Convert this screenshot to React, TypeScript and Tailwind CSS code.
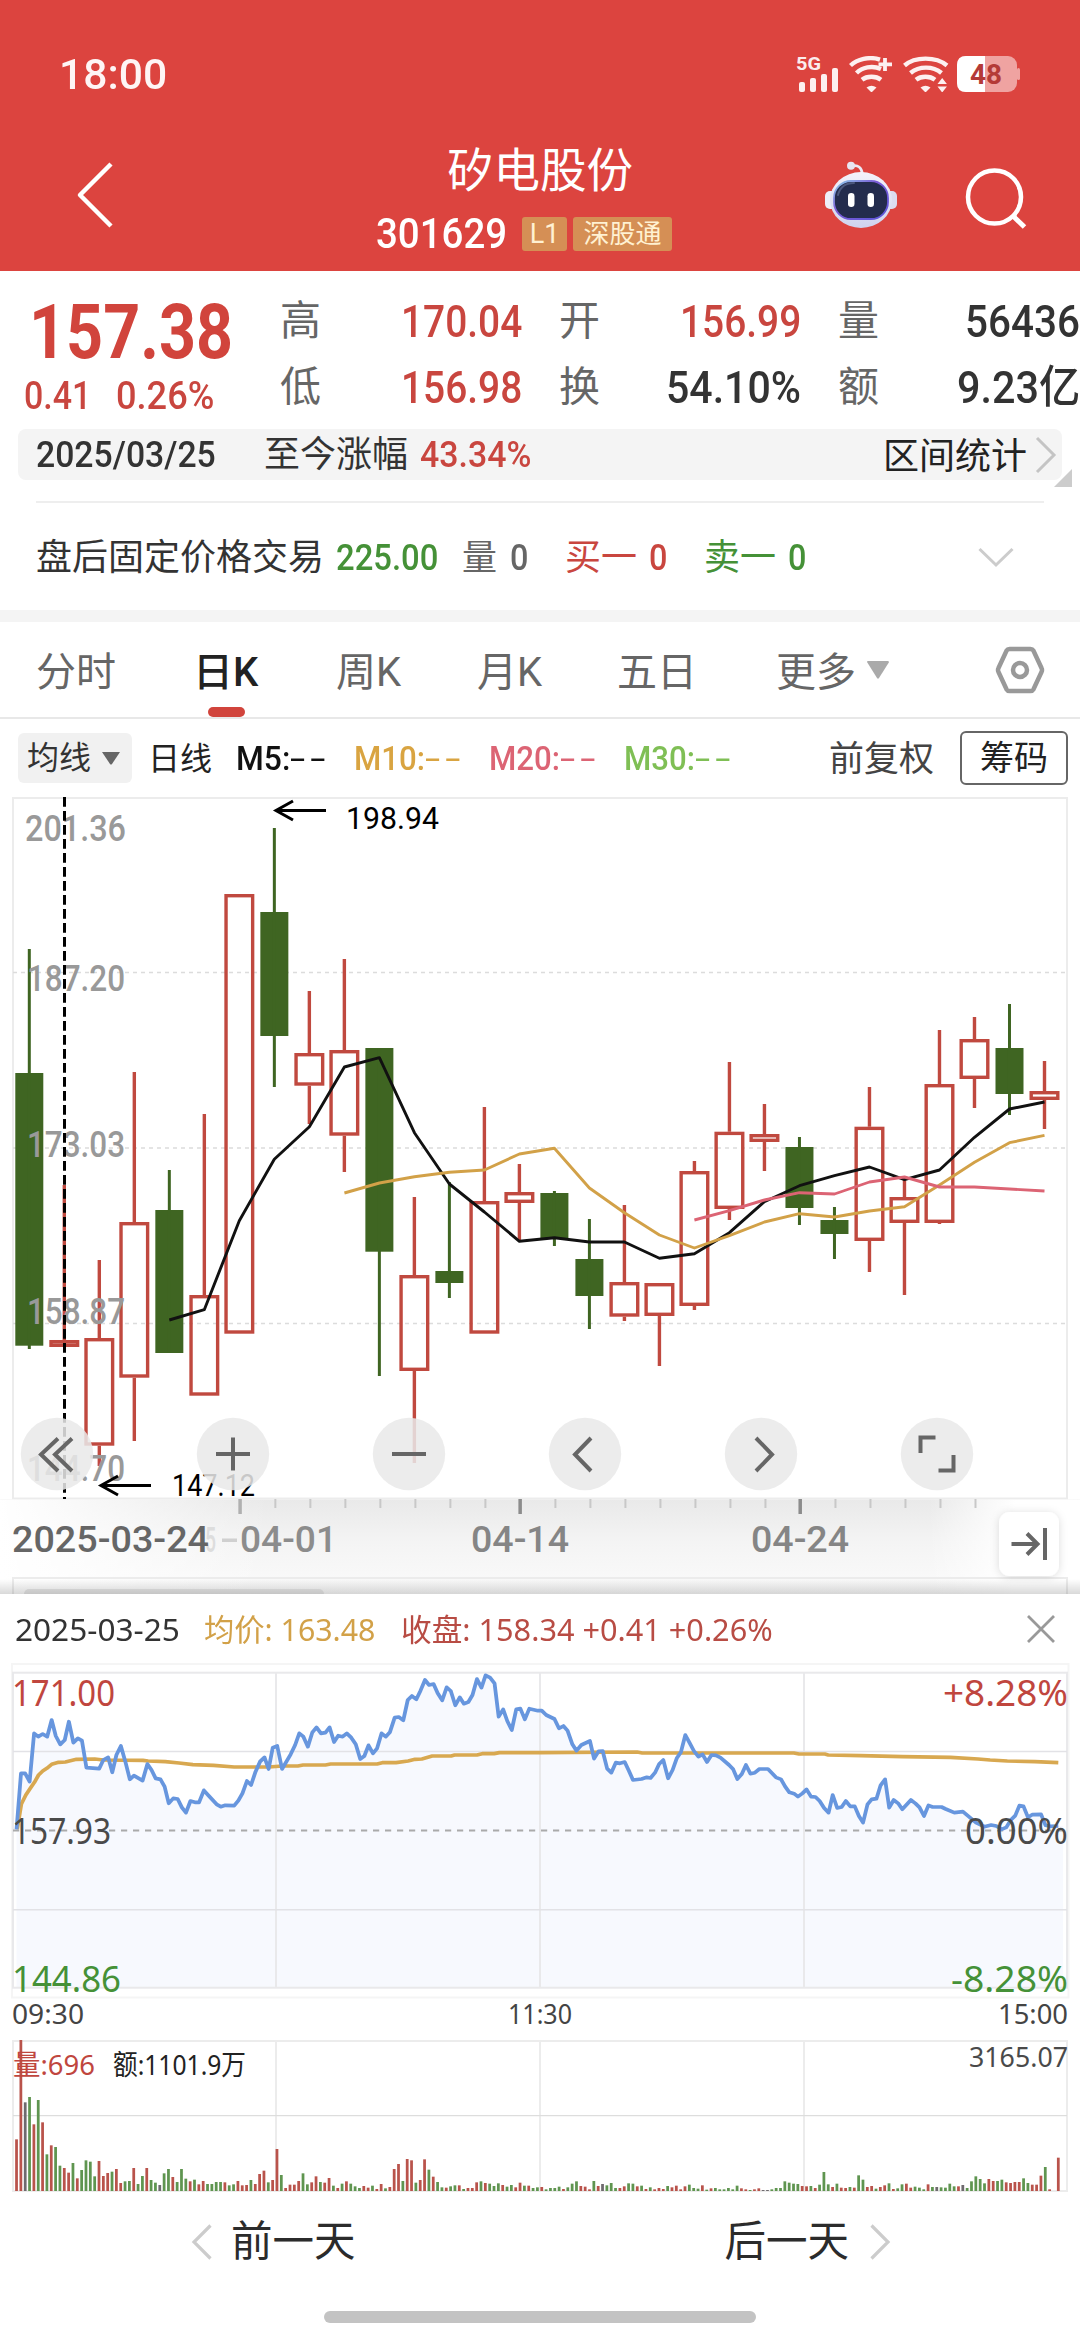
import { useLayoutEffect, useRef, type ReactNode } from "react";

const RED = "#c0493f";
const GREEN = "#3f6522";
const GRID = "#ececec";

/* Text stretched horizontally so that it fills the width given by its class. */
function Fit({ className = "", children }: { className?: string; children: ReactNode }) {
  const box = useRef<HTMLSpanElement>(null);
  const inner = useRef<HTMLSpanElement>(null);
  useLayoutEffect(() => {
    if (!box.current || !inner.current) return;
    const k = box.current.clientWidth / inner.current.offsetWidth;
    inner.current.style.transform = `scaleX(${k})`;
  }, []);
  return (
    <span ref={box} className={`block shrink-0 leading-none whitespace-nowrap ${className}`}>
      <span ref={inner} className="inline-block origin-left whitespace-pre">
        {children}
      </span>
    </span>
  );
}

type LabelProps = {
  x: number;
  y: number;
  w: number;
  size: number;
  fill: string;
  weight?: number;
  font?: string;
  children: string;
};

function Label({ x, y, w, size, fill, weight = 400, font = "Roboto", children }: LabelProps) {
  return (
    <text
      x={x}
      y={y}
      textLength={w}
      lengthAdjust="spacingAndGlyphs"
      fontSize={size}
      fontWeight={weight}
      fontFamily={`"${font}", "Noto Sans CJK SC", sans-serif`}
      fill={fill}
    >
      {children}
    </text>
  );
}

/* ---------- header ---------- */

function Wifi({ kind }: { kind: "plus" | "arrows" }) {
  return (
    <svg className="h-9 w-[46px]" viewBox="0 0 46 36" fill="none" stroke="#fff" strokeOpacity=".92" strokeWidth="4.4">
      {kind === "plus" ? (
        <>
          <path d="M1.5 9.5C8 3.5 20 0 31 3.6" />
          <path d="M7.5 17C13 11.5 23 9 32 13" />
          <path d="M13 23.8C18 19.8 27 19.8 32 23.8" />
          <path d="M36 2v13M29.5 8.3h13.5" strokeWidth="3.8" />
          <path d="M17.5 31.5q5-3.4 10 0l-5 5z" fill="#fff" fillOpacity=".92" stroke="none" />
        </>
      ) : (
        <>
          <path d="M1.5 9.5C12 .3 33 .3 44 9.5" />
          <path d="M7.5 17C16 9.8 30 9.8 38.5 17" />
          <path d="M13 23.8C18 19.8 27 19.8 32 23.8" />
          <path d="M17.5 31.5q5-3.4 10 0l-5 5z" fill="#fff" fillOpacity=".92" stroke="none" />
          <path d="M34.5 28l4.7-6 4.7 6zM34.5 30.5h9.4l-4.7 6z" fill="#fff" fillOpacity=".92" stroke="none" />
        </>
      )}
    </svg>
  );
}

function Robot() {
  return (
    <svg className="h-[68px] w-[74px]" viewBox="0 0 74 68">
      <defs>
        <linearGradient id="shell" x1="0" y1="0" x2="0" y2="1">
          <stop offset="0" stopColor="#f4f2fa" />
          <stop offset="1" stopColor="#cfd3ee" />
        </linearGradient>
        <linearGradient id="rim" x1="0" y1="0" x2="1" y2="1">
          <stop offset="0" stopColor="#8fd0ea" />
          <stop offset=".4" stopColor="#7a5bd6" />
          <stop offset="1" stopColor="#5b55d8" />
        </linearGradient>
      </defs>
      <path d="M28 5q9-2 10.5 8" fill="none" stroke="#eceaf5" strokeWidth="2.6" />
      <circle cx="27" cy="4.8" r="4" fill="#e8e6f2" />
      <rect x="1" y="30" width="12" height="18" rx="5" fill="#eeeef8" />
      <rect x="61" y="30" width="12" height="18" rx="5" fill="#dcdcf0" />
      <ellipse cx="37" cy="39" rx="31" ry="28" fill="url(#shell)" />
      <rect x="10" y="20" width="54" height="38" rx="17" fill="#232c4d" stroke="url(#rim)" strokeWidth="1.8" />
      <path d="M14 34q3-12 16-12" fill="none" stroke="#4c587c" strokeWidth="2" strokeLinecap="round" />
      <rect x="24" y="32" width="6.5" height="14" rx="3.2" fill="#fff" />
      <rect x="43.5" y="32" width="6.5" height="14" rx="3.2" fill="#fff" />
    </svg>
  );
}

function Header() {
  return (
    <header className="flex h-[271px] flex-col bg-[#dc443f] text-white">
      <div className="flex h-[148px] items-center justify-between pr-[59px] pl-[59px]">
        <Fit className="w-[108px] text-[43px] font-medium text-white/95">18:00</Fit>
        <div className="flex h-9 items-center">
          <svg className="mr-[9px] h-9 w-[44px]" viewBox="0 0 44 36" fill="#fff" fillOpacity=".92">
            <text x="0" y="13.5" fontSize="18" fontWeight="700" fontFamily="Roboto" textLength="25" lengthAdjust="spacingAndGlyphs">
              5G
            </text>
            <rect x="3" y="26" width="6" height="10" rx="2" />
            <rect x="14" y="22" width="6" height="14" rx="2" />
            <rect x="25" y="18" width="6" height="18" rx="2" />
            <rect x="36" y="12" width="6" height="24" rx="2" />
          </svg>
          <Wifi kind="plus" />
          <span className="w-2" />
          <Wifi kind="arrows" />
          <svg className="ml-2 h-9 w-[64px]" viewBox="0 0 64 36">
            <rect width="60" height="36" rx="9" fill="#efa3a1" />
            <rect x="60" y="12" width="3" height="12" rx="1.5" fill="#efa3a1" />
            <path d="M9 0h19v36H9q-9 0-9-9V9q0-9 9-9z" fill="#fff" />
            <text x="13" y="28" fontSize="28" fontWeight="700" fontFamily="Roboto" fill="#b43a37" textLength="32" lengthAdjust="spacingAndGlyphs">
              48
            </text>
          </svg>
        </div>
      </div>
      <div className="flex h-[123px]">
        <div className="w-[374px] pt-[14px] pl-[75px]">
          <svg className="h-[66px] w-10" viewBox="0 0 40 66" fill="none" stroke="#fff" strokeWidth="4.5">
            <path d="M36 2L5 33l31 31" strokeLinejoin="round" />
          </svg>
        </div>
        <div className="flex w-[330px] flex-col items-center">
          <div className="ml-[2px] flex h-[46px] items-center text-[46.5px] leading-none">矽电股份</div>
          <div className="mt-[22px] flex h-[36px] w-full items-center">
            <Fit className="mr-[15px] ml-[2px] w-[131px] text-[42px] font-medium">301629</Fit>
            <span className="flex h-[34px] w-[45px] items-center justify-center rounded-[3px] bg-[#d58f55] text-[27px] leading-none text-[#fff1d2]">
              L1
            </span>
            <span className="ml-[6px] flex h-[34px] w-[99px] items-center justify-center rounded-[3px] bg-[#d58f55] text-[26px] leading-none text-[#fff1d2]">
              深股通
            </span>
          </div>
        </div>
        <div className="flex pt-[13px] pl-[120px]">
          <Robot />
          <svg className="mt-[6px] ml-[67px] h-[62px] w-[62px]" viewBox="0 0 62 62" fill="none" stroke="#fff" strokeWidth="4.5">
            <circle cx="29.5" cy="30" r="26.5" />
            <path d="M48 49l11.5 11" strokeWidth="5" />
          </svg>
        </div>
      </div>
    </header>
  );
}

/* ---------- quote ---------- */

function Cell({ name, value, width, color }: { name: string; value: string; width: string; color: string }) {
  return (
    <div className="flex h-[66px] items-center justify-between">
      <span className="-ml-px text-[41px] leading-none text-[#666]">{name}</span>
      <Fit className={`${width} text-[45px] font-medium ${color}`}>{value}</Fit>
    </div>
  );
}

function Quote() {
  return (
    <section className="flex h-[158px]">
      <div className="w-[281px]">
        <Fit className="mt-[23px] ml-[29px] w-[204px] text-[76px] font-bold text-[#d1443c]">157.38</Fit>
        <div className="mt-[7px] ml-[24px] flex">
          <Fit className="w-[67px] text-[38px] font-medium text-[#c9463f]">0.41</Fit>
          <Fit className="ml-[25px] w-[98px] text-[38px] font-medium text-[#c9463f]">0.26%</Fit>
        </div>
      </div>
      <div className="grid grid-cols-[241px_241px_241px] content-start gap-x-[38px] pt-[17px]">
        <Cell name="高" value="170.04" width="w-[121px]" color="text-[#c9463f]" />
        <Cell name="开" value="156.99" width="w-[121px]" color="text-[#c9463f]" />
        <Cell name="量" value="56436" width="w-[115px]" color="text-[#333]" />
        <Cell name="低" value="156.98" width="w-[121px]" color="text-[#c9463f]" />
        <Cell name="换" value="54.10%" width="w-[135px]" color="text-[#333]" />
        <Cell name="额" value="9.23亿" width="w-[123px]" color="text-[#333]" />
      </div>
    </section>
  );
}

function RangeBar() {
  return (
    <section className="flex h-[72px] items-start">
      <div className="ml-[18px] flex h-[51px] w-[1044px] items-center rounded-lg bg-[#f4f4f4] text-[36px] text-[#333]">
        <Fit className="ml-[18px] w-[180px] font-medium">2025/03/25</Fit>
        <span className="ml-[48px] leading-none">至今涨幅</span>
        <Fit className="ml-[12px] w-[111px] font-medium text-[#c9463f]">43.34%</Fit>
        <span className="ml-auto pt-1 leading-none text-[#222]">区间统计</span>
        <svg className="mr-[5px] ml-[8px] h-[38px] w-[22px]" viewBox="0 0 22 38" fill="none" stroke="#c4c4c4" strokeWidth="3">
          <path d="M2 2l17 17L2 36" />
        </svg>
      </div>
      <svg className="mt-[40px] -ml-[8px] h-[18px] w-[18px]" viewBox="0 0 18 18">
        <path d="M18 0v18H0z" fill="#ccc" />
      </svg>
    </section>
  );
}

function AfterHours() {
  return (
    <section className="flex h-[107px] items-center pt-[3px] text-[36px] leading-none text-[#333]">
      <span className="ml-[36px]">盘后固定价格交易</span>
      <Fit className="ml-[12px] w-[102px] font-medium text-[#459137]">225.00</Fit>
      <span className="ml-[24px] text-[35px] text-[#666]">量</span>
      <Fit className="ml-[13px] w-[18px] font-medium text-[#666]">0</Fit>
      <span className="ml-[37px] text-[#c9463f]">买一</span>
      <Fit className="ml-[12px] w-[18px] font-medium text-[#c9463f]">0</Fit>
      <span className="ml-[37px] text-[#459137]">卖一</span>
      <Fit className="ml-[12px] w-[18px] font-medium text-[#459137]">0</Fit>
      <svg className="ml-[172px] h-[24px] w-[36px]" viewBox="0 0 36 24" fill="none" stroke="#ccc" strokeWidth="3">
        <path d="M1.5 3L18 19 34.5 3" />
      </svg>
    </section>
  );
}

/* ---------- tabs and legend ---------- */

function Tabs() {
  return (
    <nav className="flex h-[97px] border-b-2 border-[#e8e8e8] text-[40px] leading-none text-[#666]">
      <span className="mt-[31px] ml-[36px] w-[157px]">分时</span>
      <span className="flex w-[141px] flex-col text-[#222]">
        <span className="mt-[31px] h-[54px] font-medium">日K</span>
        <span className="ml-[15px] h-[10px] w-[37px] rounded-[5px] bg-[#d1443c]" />
      </span>
      <span className="mt-[31px] ml-[2px] w-[141px]">周K</span>
      <span className="mt-[31px] w-[140px]">月K</span>
      <span className="mt-[31px] w-[159px]">五日</span>
      <span className="mt-[31px] w-[90px]">更多</span>
      <svg className="mt-[38px] h-[20px] w-[24px]" viewBox="0 0 24 20">
        <path d="M1 2q0-1 1-1h20q1 0 .8 1.4L13 18q-1 1.5-2 0z" fill="#aaa" />
      </svg>
      <svg className="mt-[24px] ml-[105px] h-[48px] w-[50px]" viewBox="0 0 50 48" fill="none" stroke="#999" strokeWidth="4.5">
        <path d="M14.5 3h21q2 0 3 1.7L46.5 22q1 2 0 4L38.5 43.3q-1 1.7-3 1.7h-21q-2 0-3-1.7L3.5 26q-1-2 0-4L11.5 4.700q1-1.700 3-1.700z" />
        <circle cx="25" cy="24" r="7" />
      </svg>
    </nav>
  );
}

function Average({ name, width, color, gap }: { name: string; width: string; color: string; gap: string }) {
  return (
    <span className={`flex pt-[2px] ${gap} ${color}`}>
      <Fit className={`${width} font-medium`}>{name}</Fit>
      <Fit className="w-[40px] tracking-[3px]">--</Fit>
    </span>
  );
}

function Legend() {
  return (
    <section className="flex h-[77px] items-center text-[33px] leading-none text-[#333]">
      <span className="ml-[18px] flex h-[50px] w-[114px] items-center rounded-md bg-[#f1f1f1] pl-[9px] text-[32px]">
        均线
        <svg className="ml-[10px] h-[14px] w-[20px]" viewBox="0 0 20 14">
          <path d="M1 1h18l-8 12q-1 1-2 0z" fill="#666" />
        </svg>
      </span>
      <span className="ml-[16px] pt-[2px] text-[32px] text-[#222]">日线</span>
      <Average name="M5:" width="w-[54px]" color="text-[#111]" gap="ml-[24px]" />
      <Average name="M10:" width="w-[71px]" color="text-[#d9a441]" gap="ml-[24px]" />
      <Average name="M20:" width="w-[71px]" color="text-[#dc6474]" gap="ml-[24px]" />
      <Average name="M30:" width="w-[71px]" color="text-[#7fbf55]" gap="ml-[24px]" />
      <span className="ml-auto pt-[4px] text-[35px] text-[#444]">前复权</span>
      <span className="mr-[12px] ml-[26px] flex h-[54px] w-[108px] items-center justify-center rounded-md border-2 border-[#666] text-[34px] text-[#222]">
        筹码
      </span>
    </section>
  );
}

/* ---------- daily candles ---------- */

// [direction, high, body top, body bottom, low]
const CANDLES: [1 | -1, number, number, number, number][] = [
  [-1, 949, 1073, 1345.7, 1349],
  [1, 1185, 1340, 1347, 1347],
  [1, 1260, 1338, 1445.7, 1466],
  [1, 1072, 1222, 1377.7, 1441],
  [-1, 1170, 1210, 1353, 1353],
  [1, 1114, 1295, 1395.7, 1395.7],
  [1, 894, 894, 1333.7, 1333.7],
  [-1, 828, 912, 1036, 1087],
  [1, 991, 1053, 1085.7, 1124],
  [1, 959, 1050, 1135.7, 1172],
  [-1, 1048, 1048, 1251.7, 1376],
  [1, 1197, 1275, 1371, 1463],
  [-1, 1182, 1271, 1283, 1298],
  [1, 1107, 1201, 1333.7, 1333.7],
  [1, 1164, 1192, 1203, 1241],
  [-1, 1191, 1193, 1238, 1246],
  [-1, 1219, 1259, 1296, 1329],
  [1, 1205, 1282, 1316.7, 1321],
  [1, 1283, 1283, 1316, 1366],
  [1, 1161, 1171, 1306, 1310],
  [1, 1062, 1131.7, 1209, 1220],
  [1, 1104, 1134, 1142, 1171],
  [-1, 1137, 1147, 1208, 1225],
  [-1, 1207, 1220, 1234, 1259],
  [1, 1087, 1126.7, 1241, 1272],
  [1, 1178, 1197, 1223, 1295],
  [1, 1030, 1084, 1223, 1224],
  [1, 1017, 1039, 1079, 1108],
  [-1, 1004, 1048, 1094, 1115],
  [1, 1061, 1091, 1100, 1129],
];

const MA5 = [
  1320, 1309.7, 1220.7, 1159.3, 1126.7, 1067, 1057.7, 1132.7, 1184, 1212, 1241.3, 1237.7, 1242, 1242, 1258.3, 1253.7,
  1232.7, 1201.7, 1185.7, 1175.7, 1167, 1179.7, 1170, 1137.3, 1109, 1102,
];
const MA10 = [
  1193, 1183, 1176.7, 1172.3, 1170, 1154, 1148.3, 1188, 1212.7, 1235, 1248, 1235.7, 1222, 1213.7, 1217, 1211, 1206.7,
  1185, 1162.3, 1142.7, 1135.3,
];
const MA20 = [1220, 1210.7, 1200, 1192.7, 1194, 1182, 1177, 1187, 1187, 1189, 1191];

const cx = (i: number) => 29.3 + 35.007 * i;
const line = (ys: number[], from: number) => ys.map((y, i) => `${cx(i + from).toFixed(1)},${y}`).join(" ");

function RoundButton({ cx: x, children }: { cx: number; children: ReactNode }) {
  return (
    <g transform={`translate(${x} 1454)`}>
      <circle r="36.2" fill="#e9e9e9" fillOpacity=".86" />
      <g fill="none" stroke="#666" strokeWidth="4">
        {children}
      </g>
    </g>
  );
}

function DailyChart() {
  return (
    <svg className="block h-[798px] w-[1080px] shrink-0" viewBox="0 796 1080 798">
      <defs>
        <linearGradient id="axisDown" x1="0" y1="0" x2="0" y2="1">
          <stop offset="0" stopColor="#e9e9e9" />
          <stop offset=".45" stopColor="#f4f4f4" />
          <stop offset="1" stopColor="#fbfbfb" />
        </linearGradient>
        <linearGradient id="axisFade">
          <stop offset="0" stopColor="#fff" />
          <stop offset=".25" stopColor="#fff" stopOpacity="0" />
          <stop offset=".86" stopColor="#fff" stopOpacity="0" />
          <stop offset=".94" stopColor="#fff" />
        </linearGradient>
        <linearGradient id="sheetShade" x1="0" y1="0" x2="0" y2="1">
          <stop offset="0" stopColor="#000" stopOpacity="0" />
          <stop offset="1" stopColor="#000" stopOpacity=".15" />
        </linearGradient>
        <filter id="soft" x="-30%" y="-30%" width="160%" height="160%">
          <feDropShadow dx="0" dy="1" stdDeviation="4" floodOpacity=".14" />
        </filter>
      </defs>
      <g fill="none" stroke={GRID} strokeWidth="2">
        <rect x="13" y="798" width="1054" height="700.5" />
      </g>
      <g stroke="#dcdcdc" strokeWidth="1.3" strokeDasharray="4 4">
        <path d="M13 972.5H1066M13 1148H1066M13 1323.5H1066" />
      </g>

      {CANDLES.map(([dir, hi, top, bottom, lo], i) =>
        dir > 0 ? (
          <g key={i} fill="none" stroke={RED} strokeWidth="3.4">
            <rect x={cx(i) - 13.3} y={top + 1.7} width="26.6" height={bottom - top - 3.4} />
            <path d={`M${cx(i)} ${hi}V${top}M${cx(i)} ${bottom}V${lo}`} />
          </g>
        ) : (
          <g key={i} fill={GREEN}>
            <rect x={cx(i) - 14} y={top} width="28" height={bottom - top} />
            <rect x={cx(i) - 1.5} y={hi} width="3" height={lo - hi} />
          </g>
        )
      )}

      <g fill="none" strokeWidth="2.9" strokeLinejoin="round">
        <polyline points={line(MA5, 4)} stroke="#111" />
        <polyline points={line(MA10, 9)} stroke="#d2a148" />
        <polyline points={line(MA20, 19)} stroke="#dc6474" />
      </g>

      <Label x={25} y={841} w={101} size={36} weight={500} fill="#999">201.36</Label>
      <Label x={27} y={991} w={98} size={36} weight={500} fill="#999">187.20</Label>
      <Label x={27} y={1156.5} w={98} size={36} weight={500} fill="#999">173.03</Label>
      <Label x={27} y={1323.5} w={98} size={36} weight={500} fill="#999">158.87</Label>
      <Label x={27} y={1481} w={98} size={36} weight={500} fill="#999">144.70</Label>

      <path d="M64.5 797V1499" stroke="#000" strokeWidth="3" strokeDasharray="9.7 4.3" />

      <g fill="none" stroke="#000" strokeWidth="3">
        <path d="M326 810.5H277M293 801L276 810.5 293 820" />
        <path d="M151 1485.5H102M118 1476L101 1485.5 118 1495" />
      </g>
      <Label x={346} y={829} w={93} size={31} fill="#000">198.94</Label>
      <Label x={172} y={1496} w={83} size={31} fill="#000">147.12</Label>

      <RoundButton cx={57}>
        <path d="M1 -15.5L-16 .5 1 17M15 -15.5L-2 .5 15 17" />
      </RoundButton>
      <RoundButton cx={233}>
        <path d="M-17 0H17M0 -16.5V16.5" />
      </RoundButton>
      <RoundButton cx={409}>
        <path d="M-17 0H17" />
      </RoundButton>
      <RoundButton cx={585}>
        <path d="M6 -16L-10 .5 6 17" />
      </RoundButton>
      <RoundButton cx={761}>
        <path d="M-5 -16L11 .5 -5 17" />
      </RoundButton>
      <RoundButton cx={937}>
        <path d="M-1.5 -16.5H-16.5V-1M1.5 16.5H16.5V1" />
      </RoundButton>

      <rect x="0" y="1499.5" width="1080" height="95" fill="url(#axisDown)" />
      <rect x="0" y="1499.5" width="1080" height="95" fill="url(#axisFade)" />
      {Array.from({ length: 22 }, (_, k) => k + 6).map((i) =>
        i % 8 === 6 ? (
          <rect key={i} x={cx(i) - 1} y="1499" width="3.5" height="15" fill={i === 6 ? "#b0b0b0" : "#8c8c8c"} />
        ) : (
          <rect key={i} x={cx(i)} y="1499" width="2" height="9" fill="#c8c8c8" />
        )
      )}
      <Label x={205} y={1552} w={11} size={35} weight={500} fill="#ddd">5</Label>
      <rect x="222" y="1538.5" width="15" height="3.5" fill="#d0d0d0" />
      <Label x={12} y={1552} w={197} size={36} weight={500} fill="#666">2025-03-24</Label>
      <Label x={240} y={1552} w={97} size={36} weight={500} fill="#8c8c8c">04-01</Label>
      <Label x={471} y={1552} w={98} size={36} weight={500} fill="#858585">04-14</Label>
      <Label x={751} y={1552} w={98} size={36} weight={500} fill="#858585">04-24</Label>

      <path d="M13 1594V1578H1067V1594" fill="none" stroke={GRID} strokeWidth="2" />
      <rect x="24" y="1589" width="300" height="10" rx="5" fill="#e8e8e8" />
      <rect x="0" y="1579" width="1080" height="15" fill="url(#sheetShade)" />

      <rect x="999" y="1512" width="60" height="64" rx="11" fill="#fff" filter="url(#soft)" />
      <path d="M1011.5 1544H1037M1027 1533.5L1037.5 1544 1027 1554.5M1045 1528V1560" fill="none" stroke="#666" strokeWidth="4" />
    </svg>
  );
}

/* ---------- one-day panel ---------- */

const PRICE_LINE =
  "48,748 61,580 73,580 86,605 99,460 111,470 124,462 137,470 150,420 162,468 175,493 188,480 200,425 213,488 226,475 238,482 251,563 288,566 300,540 314,532 326,577 338,525 351,498 364,545 377,598 389,587 414,602 428,552 440,570 452,595 466,598 478,620 490,670 503,655 516,657 528,682 540,698 553,663 566,667 578,667 592,631 604,645 629,673 641,680 654,676 680,677 692,662 704,640 717,603 729,615 742,575 755,545 768,532 780,567 792,503 805,498 819,567 844,523 857,495 869,460 881,470 894,500 907,457 919,442 932,460 945,458 957,442 970,486 982,467 995,470 1007,460 1020,473 1033,493 1046,537 1058,528 1070,496 1083,520 1095,505 1108,460 1120,470 1132,457 1146,413 1158,411 1171,421 1184,360 1196,348 1209,358 1221,332 1234,300 1246,315 1259,312 1271,340 1284,361 1297,322 1309,333 1322,376 1335,352 1347,371 1360,366 1372,345 1385,297 1398,323 1410,286 1423,293 1436,310 1448,410 1461,388 1473,423 1486,450 1499,388 1511,386 1524,418 1537,386 1562,392 " +
  "1573,392 1586,405 1610,417 1623,445 1636,438 1648,452 1662,493 1674,512 1688,495 1713,483 1725,536 1738,514 1750,513 1763,566 1775,578 1788,548 1800,550 1814,546 1826,572 1838,600 1863,597 1878,592 1889,594 1902,578 1914,552 1926,540 1940,595 1953,570 1965,535 1977,517 1990,465 2002,488 2015,513 2028,530 2040,523 2053,546 2066,525 2079,526 2092,533 2117,555 2129,568 2141,597 2154,582 2166,555 2179,581 2192,578 2205,567 2230,567 2253,592 2268,598 2280,620 2292,637 2306,641 2317,650 2330,640 2342,628 2355,650 2368,651 2380,663 2393,684 2406,698 2418,645 2431,684 2444,681 2456,663 2469,679 2482,679 2494,708 2506,728 2519,673 2531,658 2545,656 2557,616 2570,598 2582,683 2595,660 2608,670 2620,688 2645,660 2658,670 2670,682 2683,708 2696,676 2708,681 2734,681 2746,687 2771,698 2796,695 2809,706 2834,728 2858,740 2878,735 2893,738 2908,748 2922,742 2935,720 2948,707 2960,677 2972,679 2985,712 2997,704 3023,703 3036,736 3048,739 3073,738";
const AVERAGE_LINE =
  "50,748 62,672 75,645 88,625 100,607 112,585 124,573 136,565 150,553 170,547 190,546 222,538 275,537 300,540 415,541 430,543 480,545 520,549 560,554 620,556 680,561 780,561 820,558 865,558 880,555 945,555 960,552 1095,552 1110,548 1150,548 1185,543 1205,538 1225,537 1255,528 1310,528 1320,525 1385,525 1400,521 1435,521 1450,518 1568,518 1850,516 1865,519 2305,519 2320,522 2395,522 2405,525 2500,527 2620,530 2760,532 2840,537 2875,540 2925,543 3005,545 3073,548";

function MinuteChart() {
  return (
    <svg className="block h-[378px] w-[1080px] shrink-0" viewBox="0 1662 1080 378">
      <g fill="none" stroke="#f5f5f5" strokeWidth="2">
        <rect x="12" y="1664" width="1056.5" height="333.5" />
      </g>
      <svg x="0" y="1662" width="1080" height="378" viewBox="0 246 3136 1134" preserveAspectRatio="none">
        <polygon points={`48,1224 ${PRICE_LINE} 3087,738 3087,1224`} fill="#f7f9fe" />
      </svg>
      <g fill="none" stroke="#e9e9eb" strokeWidth="2">
        <rect x="13" y="1672.7" width="1054" height="315" />
        <path d="M276 1673V1988M540 1673V1988M804 1673V1988" />
        <path d="M13 1751.5H1067M13 1909.7H1067" strokeWidth="1.5" stroke="#e2e2e6" />
      </g>
      <path d="M13 1830.5H1063" stroke="#aaa" strokeWidth="2" strokeDasharray="6.2 5.8" />
      <svg x="0" y="1662" width="1080" height="378" viewBox="0 246 3136 1134" preserveAspectRatio="none">
        <g fill="none" strokeWidth="11" strokeLinejoin="round">
          <polyline points={AVERAGE_LINE} stroke="#d8a850" />
          <polyline points={PRICE_LINE} stroke="#6796de" />
        </g>
      </svg>
      <Label x={12} y={1705.7} w={103} size={37} font="Noto Sans" fill="#c0463e">171.00</Label>
      <Label x={12} y={1843.7} w={99} size={37} font="Noto Sans" fill="#4a4a4a">157.93</Label>
      <Label x={12} y={1992} w={109} size={37} font="Noto Sans" fill="#459137">144.86</Label>
      <Label x={943} y={1705.7} w={125} size={37} font="Noto Sans" fill="#c0463e">+8.28%</Label>
      <Label x={965} y={1843.7} w={103} size={37} font="Noto Sans" fill="#4a4a4a">0.00%</Label>
      <Label x={951} y={1992} w={117} size={37} font="Noto Sans" fill="#459137">-8.28%</Label>
      <Label x={12} y={2024} w={72} size={28} font="Noto Sans" fill="#444">09:30</Label>
      <Label x={508} y={2024} w={64} size={28} font="Noto Sans" fill="#444">11:30</Label>
      <Label x={998} y={2024} w={70} size={28} font="Noto Sans" fill="#444">15:00</Label>
    </svg>
  );
}

// Bar tops, one per minute; r = up, g = down, k = unchanged, n = no trade.
const VOLUME =
  "388r 90r 277k 261g 343r 270g 337r 433g 406r 411g 467g 474r 488r 459g 505r 480g 451g 455g 499g 453r 498r 489r 485g 477r 519r 514g 513g 474r 522g 498g 474r 510g 518g 525k 490g 477g 501r 516g 477g 506g 514r 509g 523r 513r 522g 522g 516g 516g 517r 526g 523g 513r 526r 525r 510g 522r 492r 482r 517g 510r 417r 495g 534r 524r 524r 513r 490g 523g 517r 499r 516g 518r 504r 527g 534r 521g 514r 521g 529g 534g 528r 533r 527g 537r 522r 535g 531r 477r 462r 513g 447r 451r 518g 510r 448r 479g 500r 516g 532g 533r 529g 526g 526r 537g 534r 534r 517r 514g 519r 521g 528g 520g 525r 530g 525g 532r 518r 527g 527r 534g 532g " +
  "531r 538g 534g 534g 530g 537r 532g 521g 514g 528r 530r 538r 513g 528r 522k 526g 519g 534g 534r 529r 520g 521g 529r 527g 537r 532g 538r 534r 537r 528g 532r 527r 538r 529r 524g 534g 536g 526r 539g 535r 534g 538g 538g 534g 538g 527g 535r 538r 540g 538r 535r 540k 540k 538g 534g 534g 514g 518g 521g 522g 528r 529r 528g 534r 524g 486g 523g 531r 521g 533r 534r 531g 533r 496g 509g 531r 528r 536g 531r 526r 520g 537r 535g 523g 521r 533r 530g 533g 538g 523r 531g 531k 532g 533g 521g 529g 529r 525k 534g 514g 499g 507g 520g 507r 513r 513g 509g 517r 519r 516r 516r 505g 519g 524r 524r 497r 471g 538r 543n 443r";
const VOLUME_COLOR: Record<string, string> = { r: "#b9534b", g: "#5f9550", k: "#6e6a6e", n: "none" };

function VolumeChart() {
  const bars = VOLUME.split(" ");
  const step = (3073 - 48) / (bars.length - 1);
  return (
    <svg className="block h-[152px] w-[1080px] shrink-0" viewBox="0 2040 1080 152">
      <g fill="none" stroke={GRID} strokeWidth="2">
        <rect x="13" y="2041" width="1054" height="150" />
        <path d="M276 2041V2191M540 2041V2191M804 2041V2191" />
        <path d="M13 2115.7H1067" strokeWidth="1.3" stroke="#ddd" />
      </g>
      <svg x="0" y="2040" width="1080" height="151" viewBox="0 90 3136 453" preserveAspectRatio="none">
        {bars.map((bar, i) => {
          const top = parseInt(bar, 10);
          return (
            <rect key={i} x={48 + i * step - 4} y={top} width="8" height={543 - top} fill={VOLUME_COLOR[bar.slice(-1)]} />
          );
        })}
      </svg>
      <Label x={13} y={2075} w={82} size={28} font="Noto Sans" fill="#c0463e">量:696</Label>
      <Label x={113} y={2075} w={133} size={28} font="Noto Sans" fill="#222">额:1101.9万</Label>
      <Label x={969} y={2066.5} w={99} size={28} font="Noto Sans" fill="#4a4a4a">3165.07</Label>
    </svg>
  );
}

function Chevron({ left }: { left?: boolean }) {
  return (
    <svg className="h-[38px] w-[22px]" viewBox="0 0 22 38" fill="none" stroke="#ccc" strokeWidth="3.2">
      <path d={left ? "M19.5 2.5L3 19l16.5 16.5" : "M2.5 2.5L19 19 2.5 35.5"} />
    </svg>
  );
}

function DayPanel() {
  return (
    <section className="flex flex-1 flex-col bg-white">
      <div className="flex h-[68px] shrink-0 items-center pt-[3px] leading-none text-[31px] [font-family:'Noto_Sans','Noto_Sans_CJK_SC',sans-serif]">
        <Fit className="ml-[15px] w-[165px] text-[#333]">2025-03-25</Fit>
        <Fit className="ml-[24px] w-[171px] text-[#d2a148]">均价: 163.48</Fit>
        <Fit className="ml-[26px] w-[372px] text-[#b84c44]">收盘: 158.34 +0.41 +0.26%</Fit>
        <svg className="-mt-[2px] mr-[24px] ml-auto h-[30px] w-[30px]" viewBox="0 0 30 30" fill="none" stroke="#999" strokeWidth="2.8">
          <path d="M2 2l26 26M28 2L2 28" />
        </svg>
      </div>
      <MinuteChart />
      <VolumeChart />
      <div className="flex h-[99px] items-center text-[41.5px] leading-none text-[#2b2b2b]">
        <span className="ml-[191px] flex items-center gap-[18px]">
          <Chevron left />
          <span className="pt-px">前一天</span>
        </span>
        <span className="ml-[369px] flex items-center gap-[20px]">
          <span className="pt-px">后一天</span>
          <Chevron />
        </span>
      </div>
      <div className="mx-auto mt-[20px] h-3 w-[432px] rounded-full bg-[#c3c3c3]" />
    </section>
  );
}

export default function App() {
  return (
    <main className="flex h-[2344px] w-[1080px] flex-col overflow-hidden bg-white [font-family:Roboto,'Noto_Sans_CJK_SC',sans-serif]">
      <Header />
      <Quote />
      <RangeBar />
      <div className="mr-[36px] ml-[36px] h-[2px] shrink-0 bg-[#eee]" />
      <AfterHours />
      <div className="h-[12px] shrink-0 bg-[#f4f4f4]" />
      <Tabs />
      <Legend />
      <DailyChart />
      <DayPanel />
    </main>
  );
}
